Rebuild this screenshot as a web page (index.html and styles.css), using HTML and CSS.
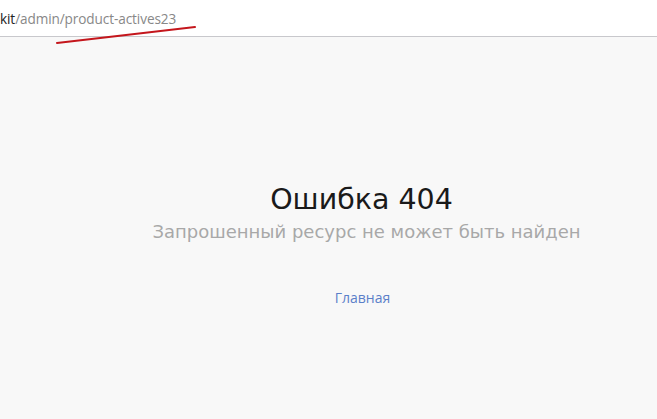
FILE: index.html
```html
<!DOCTYPE html>
<html lang="ru">
<head>
<meta charset="utf-8">
<link rel="stylesheet" href="styles.css">
</head>
<body>
<div class="addr">
  <span class="host">kit</span><span class="path">/admin/product-actives23</span>
</div>
<svg class="mark" width="657" height="60" viewBox="0 0 657 60"><line x1="57" y1="43" x2="195" y2="27" stroke="#c4161c" stroke-width="2" stroke-linecap="round"/></svg>
<main class="page">
  <h1 class="title">Ошибка 404</h1>
  <p class="sub">Запрошенный ресурс не может быть найден</p>
  <a class="home" href="#">Главная</a>
</main>
</body>
</html>
```
FILE: styles.css
```css
html, body { margin: 0; padding: 0; }
body { width: 657px; height: 419px; overflow: hidden; background: #f8f8f8; position: relative; font-family: "Open Sans", sans-serif; }
.addr { height: 37px; box-sizing: border-box; background: #fff; border-bottom: 1px solid #c8c8cc; display: flex; align-items: center; font-family: "Open Sans", sans-serif; font-size: 13.6px; letter-spacing: -0.1px; }
.host { color: #222; }
.path { color: #888; }
.mark { position: absolute; left: 0; top: 0; pointer-events: none; }
.page { display: flex; flex-direction: column; align-items: center; padding-left: 70px; padding-top: 145px; }
.title { margin: 0 4px 0 0; font-family: "DejaVu Sans", sans-serif; font-weight: 400; font-size: 28.5px; color: #1a1a1a; line-height: 36px; }
.sub { margin: 0 0 0 6px; font-family: "DejaVu Sans", sans-serif; font-size: 18px; color: #a8a8a8; line-height: 27px; }
.home { margin-top: 43px; margin-right: 2px; font-family: "Open Sans", sans-serif; font-size: 14px; color: #5b7fc9; text-decoration: none; line-height: 20px; }
```
